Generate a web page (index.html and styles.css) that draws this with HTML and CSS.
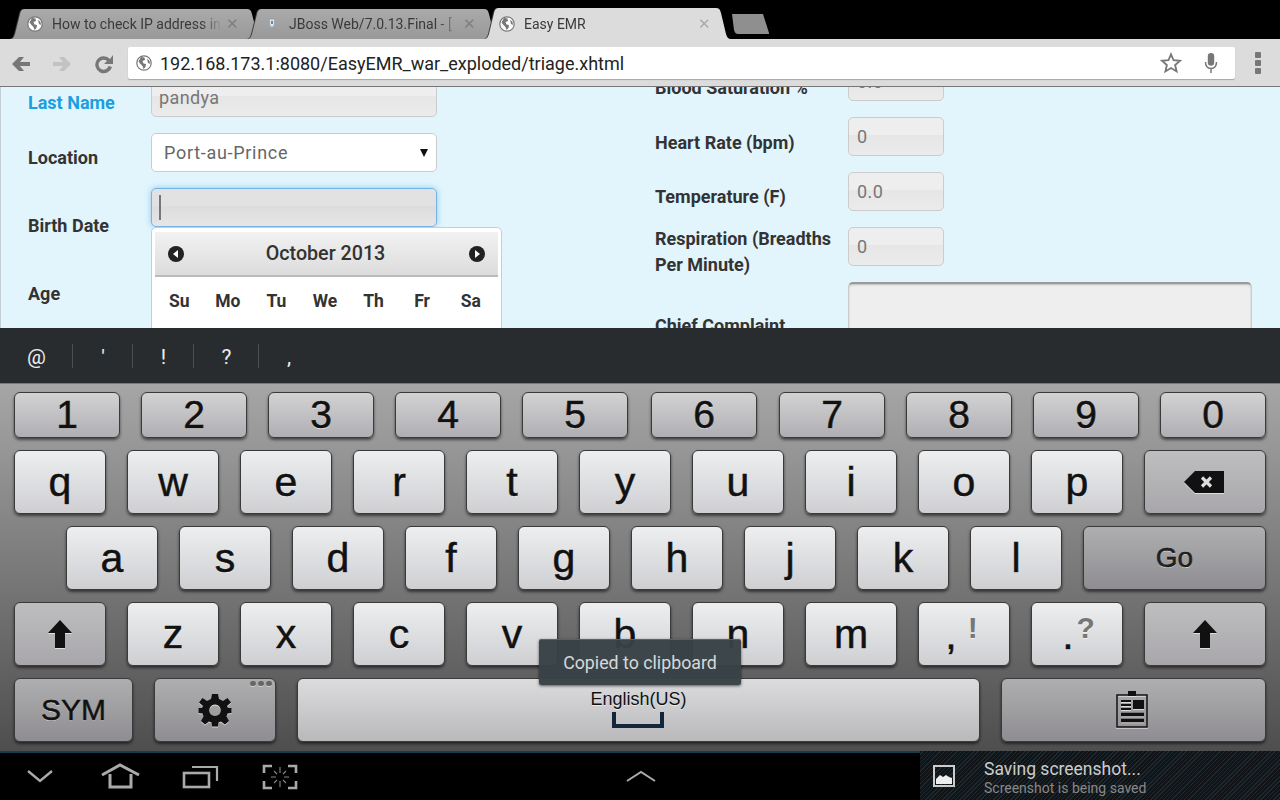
FILE: index.html
```html
<!DOCTYPE html>
<html lang="en">
  <head>
    <meta charset="UTF-8" />
    <title>Easy EMR</title>
    <link rel="stylesheet" href="styles.css">
  </head>
  <body>
    <svg class="defs" width="0" height="0">
      <symbol id="globe" viewBox="0 0 16 16">
        <circle cx="8" cy="8" r="7.2" fill="#fff" stroke="#777" stroke-width="1.2" />
        <path d="M5 2 L8.5 2.5 L9 5 L6.5 6 L7.5 8.5 L10 9 L9.5 12 L7.5 14 L6.5 11 L4 8.5 L2.5 6.5 Z" fill="#777" />
        <path d="M11 3.5 L13.5 6 L14 9 L12 8 Z" fill="#777" />
      </symbol>
      <symbol id="shift" viewBox="0 0 26 30">
        <path d="M13 1 L25 14 L18 14 L18 29 L8 29 L8 14 L1 14 Z" fill="#111" />
      </symbol>
    </svg>

    <div class="tabstrip">
      <div class="tab">
        <div class="tab-shape">
          <svg class="favicon"><use href="#globe" /></svg>
          <span class="tab-title">How to check IP address in</span>
          <span class="tab-close">&#10005;</span>
        </div>
      </div>
      <div class="tab">
        <div class="tab-shape">
          <svg class="favicon" viewBox="0 0 16 16">
            <path d="M5 3 L11 3 L10.5 9 L8 12 L5.5 9 Z" fill="#dfe6ea" stroke="#8aa0ad" />
            <rect x="7" y="5" width="2" height="3" fill="#6d8797" />
          </svg>
          <span class="tab-title">JBoss Web/7.0.13.Final - [</span>
          <span class="tab-close">&#10005;</span>
        </div>
      </div>
      <div class="tab active">
        <div class="tab-shape">
          <svg class="favicon"><use href="#globe" /></svg>
          <span class="tab-title">Easy EMR</span>
          <span class="tab-close">&#10005;</span>
        </div>
      </div>
      <div class="newtab"></div>
    </div>

    <div class="toolbar">
      <svg class="toolbtn" viewBox="0 0 24 24">
        <path d="M21 10 L11 10 L15 5 L10 5 L3 12 L10 19 L15 19 L11 14 L21 14 Z" fill="#777" />
      </svg>
      <svg class="toolbtn" viewBox="0 0 24 24">
        <path d="M3 10 L13 10 L9 5 L14 5 L21 12 L14 19 L9 19 L13 14 L3 14 Z" fill="#c2c2c2" />
      </svg>
      <svg class="toolbtn" viewBox="0 0 24 24">
        <path d="M18 7 A8.5 8.5 0 1 0 20 15 L16.4 14 A5 5 0 1 1 15 9 L12 12 L21 12 L21 3 Z" fill="#777" />
      </svg>
      <div class="omnibox">
        <svg class="omni-globe"><use href="#globe" /></svg>
        <span class="url">192.168.173.1:8080/EasyEMR_war_exploded/triage.xhtml</span>
        <svg class="omni-icon star" viewBox="0 0 24 24">
          <path d="M12 2.5 L14.8 9 L21.8 9.6 L16.5 14.2 L18.1 21.2 L12 17.5 L5.9 21.2 L7.5 14.2 L2.2 9.6 L9.2 9 Z" fill="none" stroke="#777" stroke-width="2" />
        </svg>
        <svg class="omni-icon" viewBox="0 0 24 24">
          <rect x="8.5" y="1" width="7" height="14" rx="3.5" fill="#777" />
          <path d="M6 11 C6 16 9 18 12 18 C15 18 18 16 18 11 M12 18 L12 23" fill="none" stroke="#777" stroke-width="1.6" />
        </svg>
      </div>
      <div class="menu"><i></i><i></i><i></i></div>
    </div>

    <div class="page">
      <div class="form">
        <div class="col left">
          <div class="row">
            <label class="label label-first">Last Name</label>
            <div class="input wide">pandya</div>
          </div>
          <div class="row">
            <label class="label">Location</label>
            <div class="select">Port-au-Prince<span class="arrow"></span></div>
          </div>
          <div class="row row-birth">
            <label class="label label-birth">Birth Date</label>
            <div class="input wide focused"><span class="caret"></span></div>
            <div class="datepicker">
              <div class="dp-head">
                <svg class="dp-nav" viewBox="0 0 16 16"><circle cx="8" cy="8" r="8" fill="#222" /><path d="M10 4 L10 12 L5 8 Z" fill="#fff" /></svg>
                <span class="dp-title">October 2013</span>
                <svg class="dp-nav" viewBox="0 0 16 16"><circle cx="8" cy="8" r="8" fill="#222" /><path d="M6 4 L6 12 L11 8 Z" fill="#fff" /></svg>
              </div>
              <div class="dp-days">
                <span>Su</span><span>Mo</span><span>Tu</span><span>We</span><span>Th</span><span>Fr</span><span>Sa</span>
              </div>
            </div>
          </div>
          <div class="row">
            <label class="label label-age">Age</label>
          </div>
        </div>
        <div class="col right">
          <div class="row">
            <label class="label">Blood Saturation %</label>
            <div class="input small">0.0</div>
          </div>
          <div class="row">
            <label class="label">Heart Rate (bpm)</label>
            <div class="input small">0</div>
          </div>
          <div class="row">
            <label class="label label-temp">Temperature (F)</label>
            <div class="input small">0.0</div>
          </div>
          <div class="row row-resp">
            <label class="label label-resp">Respiration (Breadths Per Minute)</label>
            <div class="input small">0</div>
          </div>
          <div class="row">
            <label class="label label-chief">Chief Complaint</label>
            <div class="textarea"></div>
          </div>
        </div>
      </div>
    </div>

    <div class="suggest">
      <span class="sug s1">@</span>
      <span class="sug s2">'</span>
      <span class="sug s3">!</span>
      <span class="sug s4">?</span>
      <span class="sug s5">,</span>
    </div>

    <div class="keyboard">
      <div class="keyrow numbers">
        <div class="key num">1</div><div class="key num">2</div><div class="key num">3</div><div class="key num">4</div><div class="key num">5</div>
        <div class="key num">6</div><div class="key num">7</div><div class="key num">8</div><div class="key num">9</div><div class="key num">0</div>
      </div>
      <div class="keyrow">
        <div class="key">q</div><div class="key">w</div><div class="key">e</div><div class="key">r</div><div class="key">t</div>
        <div class="key">y</div><div class="key">u</div><div class="key">i</div><div class="key">o</div><div class="key">p</div>
        <div class="key fn w122">
          <svg class="del" viewBox="0 0 40 22">
            <path d="M0 11 L11 0 L40 0 L40 22 L11 22 Z" fill="#111" />
            <path d="M18 6.5 L27 15.5 M27 6.5 L18 15.5" stroke="#ddd" stroke-width="3.2" />
          </svg>
        </div>
      </div>
      <div class="keyrow indent">
        <div class="key">a</div><div class="key">s</div><div class="key">d</div><div class="key">f</div><div class="key">g</div>
        <div class="key">h</div><div class="key">j</div><div class="key">k</div><div class="key">l</div>
        <div class="key dark w183 go">Go</div>
      </div>
      <div class="keyrow">
        <div class="key fn"><svg class="shift"><use href="#shift" /></svg></div>
        <div class="key">z</div><div class="key">x</div><div class="key">c</div><div class="key">v</div><div class="key">b</div>
        <div class="key">n</div><div class="key">m</div>
        <div class="key alt alt-comma">,<sup>!</sup></div>
        <div class="key alt alt-dot">.<sup>?</sup></div>
        <div class="key fn w122"><svg class="shift"><use href="#shift" /></svg></div>
      </div>
      <div class="keyrow">
        <div class="key dark w119 sym">SYM</div>
        <div class="key dark w122 gearkey">
          <span class="dots"><i></i><i></i><i></i></span>
          <svg class="gear" viewBox="0 0 34 34">
            <path d="M14 1 L20 1 L21 6 L25 8 L29.5 5 L33 9.5 L29 13 L30 15 L33.5 15 L33.5 20 L29.5 20.5 L28.5 23.5 L31 28 L27 31.5 L23 28.5 L20.5 29.5 L20 33.5 L14 33.5 L13.5 29.5 L11 28.5 L7 31.5 L3 28 L5.5 23.5 L4.5 20.5 L0.5 20 L0.5 15 L4 15 L5 13 L1 9.5 L4.5 5 L9 8 L13 6 Z M17 11.5 A5.8 5.8 0 1 0 17.01 11.5 Z" fill="#111" fill-rule="evenodd" />
          </svg>
        </div>
        <div class="key space">
          <span class="lang">English(US)</span>
          <span class="spacebar"></span>
        </div>
        <div class="key dark w265">
          <svg class="clip" viewBox="0 0 32 37">
            <path d="M1 4 L31 4 L31 36 L1 36 Z" fill="none" stroke="#111" stroke-width="1.6" />
            <rect x="12" y="0" width="8" height="5" fill="#111" />
            <rect x="17" y="9" width="11" height="9" fill="#111" />
            <path d="M5 10 L15 10 M5 14 L15 14 M5 18 L15 18" stroke="#111" stroke-width="2" />
            <path d="M5 23.5 L28 23.5 M5 29.5 L28 29.5" stroke="#111" stroke-width="3.4" />
          </svg>
        </div>
      </div>
      <div class="toast">Copied to clipboard</div>
    </div>

    <div class="navbar">
      <svg class="nav-icons" viewBox="0 0 300 46">
        <path d="M28 18 L40 28 L52 18" fill="none" stroke="#aaa" stroke-width="2.4" />
        <path d="M102 22 L120 12 L139 22 M110 21 L110 34 L131 34 L131 21" fill="none" stroke="#aaa" stroke-width="3" />
        <rect x="184" y="20" width="25" height="14" fill="none" stroke="#aaa" stroke-width="2.6" />
        <path d="M192 14 L217 14 L217 28" fill="none" stroke="#aaa" stroke-width="2.2" />
        <path d="M272 13 L264 13 L264 20 M288 13 L296 13 L296 20 M264 28 L264 35 L272 35 M296 28 L296 35 L288 35" fill="none" stroke="#aaa" stroke-width="2.6" />
        <path d="M280 14 L280 20 M280 28 L280 34 M271 24 L276 24 M284 24 L289 24 M274 18 L277 21 M286 18 L283 21 M274 30 L277 27 M286 30 L283 27" stroke="#888" stroke-width="1.1" />
      </svg>
      <svg class="nav-up" viewBox="0 0 30 12">
        <path d="M1 11 L15 2 L29 11" fill="none" stroke="#aaa" stroke-width="2" />
      </svg>
      <div class="notif">
        <svg class="notif-icon" viewBox="0 0 22 22">
          <rect x="1" y="1" width="20" height="20" fill="none" stroke="#ccc" stroke-width="2" />
          <path d="M3 19 L3 14 L7 10 L10 12 L13 10 L16 12 L19 13 L19 19 Z" fill="#eee" />
        </svg>
        <div class="notif-text">
          <div class="notif-title">Saving screenshot...</div>
          <div class="notif-sub">Screenshot is being saved</div>
        </div>
      </div>
    </div>
  </body>
</html>
```

FILE: styles.css
```css
body {
  margin: 0;
  padding: 0;
  width: 1280px;
  height: 800px;
  overflow: hidden;
  background-color: #000;
  font-family: Roboto, sans-serif;
  display: flex;
  flex-direction: column;
}
.defs {
  position: absolute;
}

/* tabs */
.tabstrip {
  height: 30px;
  padding: 9px 0 0 10px;
  display: flex;
  align-items: flex-end;
  flex: none;
}
.tab {
  width: 252px;
  height: 30px;
  margin-right: -15px;
  filter: drop-shadow(-1px 0 0 #3c3c3c);
}
.tab-shape {
  width: 252px;
  height: 30px;
  display: flex;
  align-items: center;
  padding-left: 17px;
  box-sizing: border-box;
  background: linear-gradient(#aaa, #999);
  clip-path: path("M0 30 C3 30 4 28 5 25 L10 5 C11 1 12 0 16 0 L236 0 C240 0 241 1 242 5 L247 25 C248 28 249 30 252 30 Z");
}
.tab.active {
  width: 247px;
  height: 31px;
}
.tab.active .tab-shape {
  width: 247px;
  height: 31px;
  background: #dcdcdc;
  padding-left: 15px;
  clip-path: path("M0 31 C3 31 4 29 5 26 L10 5 C11 1 12 0 16 0 L231 0 C235 0 236 1 237 5 L242 26 C243 29 244 31 247 31 Z");
}
.favicon {
  width: 16px;
  height: 16px;
  flex: none;
  margin-right: 9px;
}
.tab-title {
  width: 170px;
  flex: none;
  font-size: 14px;
  color: #3a3a3a;
  white-space: nowrap;
  overflow: hidden;
  -webkit-mask-image: linear-gradient(to right, #000 88%, transparent);
  mask-image: linear-gradient(to right, #000 88%, transparent);
}
.tab-close {
  font-size: 15px;
  font-family: "DejaVu Sans", sans-serif;
  font-weight: bold;
  color: #7e7e7e;
  margin-left: 4px;
}
.tab.active .tab-close {
  color: #aaa;
}
.newtab {
  width: 38px;
  height: 20px;
  margin: 0 0 5px 15px;
  background: #8f8f8f;
  clip-path: path("M1 0 L32 0 L38 19 L38 20 L7 20 C5 20 4 19 3 16 Z");
}

/* toolbar */
.toolbar {
  height: 47px;
  background-color: #dcdcdc;
  border-bottom: 1px solid #777;
  display: flex;
  align-items: center;
  flex: none;
}
.toolbtn {
  width: 24px;
  height: 24px;
  margin: 2px 0 0 17px;
  flex: none;
}
.toolbtn:first-child {
  margin-left: 9px;
}
.toolbtn:nth-child(3) {
  margin-left: 18px;
}
.omnibox {
  width: 1107px;
  height: 32px;
  margin: 1px 0 0 12px;
  background-color: #fff;
  border-radius: 2px;
  box-shadow: 0 1px 1px rgba(0, 0, 0, 0.25);
  display: flex;
  align-items: center;
  flex: none;
}
.omni-globe {
  width: 16px;
  height: 16px;
  margin-left: 8px;
}
.url {
  font-size: 18px;
  color: #222;
  margin-left: 8px;
  flex: 1;
  white-space: nowrap;
}
.omni-icon {
  width: 22px;
  height: 22px;
  margin-right: 13px;
}
.omni-icon.star {
  margin-right: 18px;
}
.menu {
  margin: 1px 0 0 20px;
  display: flex;
  flex-direction: column;
  gap: 2px;
}
.menu i {
  display: block;
  width: 6px;
  height: 6px;
  background-color: #777;
  border-radius: 1px;
}

/* page under the keyboard */
.page {
  height: 241px;
  flex: none;
  overflow: hidden;
  background-color: #e2f5fd;
  border-left: 1px solid #c4cfd4;
  box-sizing: border-box;
}
.form {
  margin-top: -25px;
  display: grid;
  grid-template-columns: 654px 1fr;
}
.col.left {
  padding: 16px 0 0 27px;
}
.row {
  display: flex;
  align-items: flex-start;
  margin-bottom: 16px;
  position: relative;
}
.label {
  font-size: 18px;
  font-weight: bold;
  line-height: 26px;
  color: #333;
}
.left .label {
  width: 123px;
  flex: none;
  margin-top: 12px;
}
.left .label-first {
  color: #1a9fe0;
}
.left .label-birth {
  margin-top: 25px;
}
.left .label-age {
  margin-top: 11px;
}
.row-birth {
  height: 66px;
}
.right .label {
  width: 193px;
  flex: none;
  margin-top: 13px;
}
.right .label-temp {
  margin-top: 12px;
}
.row-resp {
  height: 39px;
}
.right .label-resp {
  margin-top: -1px;
  padding-right: 10px;
  box-sizing: border-box;
}
.right .label-chief {
  margin-top: 31px;
}
.input {
  box-sizing: border-box;
  height: 39px;
  border: 1px solid #ccc;
  border-radius: 5px;
  background: linear-gradient(#eee 0, #eee 45%, #e6e6e6 46%, #ebebeb 100%);
  font-size: 18px;
  line-height: 37px;
  letter-spacing: 0.4px;
  color: #777;
  padding-left: 7px;
}
.wide {
  width: 286px;
}
.small {
  width: 96px;
  padding-left: 8px;
}
.select {
  box-sizing: border-box;
  width: 286px;
  height: 39px;
  background-color: #fff;
  border: 1px solid #ccc;
  border-radius: 5px;
  font-size: 18px;
  line-height: 37px;
  letter-spacing: 0.7px;
  color: #666;
  padding-left: 12px;
  position: relative;
}
.arrow {
  position: absolute;
  right: 8px;
  top: 15px;
  border-left: 4px solid transparent;
  border-right: 4px solid transparent;
  border-top: 8px solid #111;
}
.focused {
  border-color: #72b4e8;
  box-shadow: 0 0 6px #8cc8f0;
  background: linear-gradient(#e2e2e2 0, #e2e2e2 45%, #dcdcdc 46%, #e6e6e6 100%);
  position: relative;
}
.caret {
  position: absolute;
  left: 7px;
  top: 6px;
  width: 2px;
  height: 25px;
  background-color: #777;
}
.textarea {
  box-sizing: border-box;
  width: 404px;
  height: 120px;
  background-color: #eee;
  border: 1px solid #ccc;
  border-top: 2px solid #999;
  border-radius: 5px;
  box-shadow: inset 0 1px 2px rgba(0, 0, 0, 0.2);
}

/* calendar popup */
.datepicker {
  position: absolute;
  left: 123px;
  top: 39px;
  box-sizing: border-box;
  width: 351px;
  height: 150px;
  padding: 4px 3px 0;
  background-color: #fff;
  border: 1px solid #ccc;
  border-radius: 5px;
}
.dp-head {
  height: 45px;
  background: linear-gradient(#f2f2f2, #dcdcdc);
  border-bottom: 2px solid #bbb;
  display: flex;
  align-items: center;
  justify-content: space-between;
  padding: 0 13px;
  box-sizing: border-box;
}
.dp-nav {
  width: 16px;
  height: 16px;
}
.dp-title {
  font-size: 19.7px;
  font-weight: 500;
  color: #333;
  margin: -1px 2px 0 0;
}
.dp-days {
  width: 340px;
  display: grid;
  grid-template-columns: repeat(7, 1fr);
  text-align: center;
  font-size: 17.5px;
  font-weight: bold;
  color: #333;
  margin-top: 14px;
}

/* keyboard suggestions */
.suggest {
  height: 56px;
  flex: none;
  box-sizing: border-box;
  background-color: #282c2f;
  border-bottom: 1px solid #777;
  padding: 2px 0 0 27px;
  display: flex;
  align-items: center;
  color: #eee;
  font-size: 21px;
}
.sug {
  position: relative;
  text-align: center;
}
.sug::after {
  content: "";
  position: absolute;
  right: 0;
  top: -1px;
  width: 1px;
  height: 24px;
  background-color: #4a4f52;
}
.s1 {
  width: 46px;
  text-align: left;
}
.s2 {
  width: 60px;
}
.s3 {
  width: 61px;
}
.s4 {
  width: 65px;
}
.s5 {
  width: 60px;
}
.s5::after {
  display: none;
}

/* keyboard */
.keyboard {
  height: 368px;
  flex: none;
  box-sizing: border-box;
  padding: 8px 14px 0;
  background: linear-gradient(#a6a6a6, #4e4e4e);
  display: flex;
  flex-direction: column;
  gap: 12px;
  position: relative;
}
.keyrow {
  display: flex;
  gap: 21px;
  height: 64px;
}
.keyrow.numbers {
  height: 46px;
}
.keyrow.indent {
  padding-left: 52px;
}
.key {
  box-sizing: border-box;
  width: 92px;
  flex: none;
  border: 1px solid #3a3a3a;
  border-radius: 6px;
  background: linear-gradient(#eceef0, #cfcfd2);
  box-shadow: 0 2px 3px rgba(0, 0, 0, 0.55);
  font-family: "Liberation Sans", sans-serif;
  font-size: 41px;
  color: #111;
  -webkit-text-stroke: 0.5px #111;
  text-shadow: 0 1px 0 rgba(255, 255, 255, 0.6);
  display: flex;
  align-items: center;
  justify-content: center;
  position: relative;
}
.key svg {
  filter: drop-shadow(0 1px 0 rgba(255, 255, 255, 0.6));
}
.key.num {
  width: 106px;
  font-size: 39px;
  background: linear-gradient(#d2d2d4, #b0aeb2);
}
.key.num:nth-child(6) {
  margin-left: 2px;
}
.key.num:nth-child(7) {
  margin-left: 1px;
}
.key.fn {
  background: linear-gradient(#bebec0, #a8a6aa);
}
.key.dark {
  background: linear-gradient(#aeaeb0, #8f8d91);
}
.go {
  font-size: 28px;
  color: #222;
}
.sym {
  font-size: 30px;
  color: #111;
}
.w119 {
  width: 119px;
}
.w122 {
  width: 122px;
}
.w183 {
  width: 183px;
}
.w265 {
  width: 265px;
}
.alt {
  align-items: flex-end;
  padding-bottom: 6px;
}
.alt sup {
  font-size: 30px;
  font-weight: bold;
  color: #777;
  -webkit-text-stroke: 0;
  line-height: 1;
  margin: 0 0 16px 6px;
  vertical-align: baseline;
}
.alt-comma {
  padding-right: 5px;
}
.alt-comma sup {
  margin-left: 11px;
}
.alt-dot {
  padding-left: 3px;
}
.alt-dot sup {
  margin-left: 3px;
}
.shift {
  width: 26px;
  height: 30px;
}
.del {
  width: 40px;
  height: 22px;
  margin-right: 2px;
}
.gear {
  width: 34px;
  height: 34px;
}
.dots {
  position: absolute;
  top: 2px;
  right: 3px;
  display: flex;
  gap: 2px;
}
.dots i {
  display: block;
  width: 6px;
  height: 5px;
  border-radius: 3px;
  background-color: #666;
  box-shadow: 0 1px 0 #ccc;
}
.space {
  width: 683px;
  flex-direction: column;
  justify-content: flex-start;
  padding-top: 10px;
  background: linear-gradient(#dcdcde, #b9b8ba);
  -webkit-text-stroke: 0;
}
.lang {
  font-size: 18px;
  line-height: 21px;
}
.spacebar {
  box-sizing: border-box;
  width: 52px;
  height: 16px;
  margin: 2px 2px 0 0;
  border: 4px solid #12263c;
  border-top: none;
}
.clip {
  width: 32px;
  height: 37px;
  margin: -2px 4px 0 0;
}
.toast {
  position: absolute;
  left: 539px;
  top: 255px;
  width: 202px;
  height: 46px;
  box-sizing: border-box;
  background-color: rgba(56, 66, 70, 0.97);
  border-top: 1px solid #5a6265;
  border-radius: 2px;
  box-shadow: 0 1px 3px rgba(0, 0, 0, 0.6);
  color: #d8d8d8;
  font-size: 17.8px;
  line-height: 46px;
  text-align: center;
}

/* system bar */
.navbar {
  flex: 1;
  background-color: #000;
  border-top: 2px solid #153e4e;
  margin-top: -1px;
  display: flex;
  position: relative;
}
.nav-icons {
  width: 300px;
  height: 46px;
  margin-right: 326px;
  flex: none;
}
.nav-up {
  width: 30px;
  height: 12px;
  margin-top: 17px;
  flex: none;
}
.notif {
  margin-left: auto;
  width: 360px;
  margin-top: -2px;
  box-sizing: border-box;
  padding-left: 13px;
  display: flex;
  align-items: center;
  background: repeating-linear-gradient(135deg, #111416 0, #111416 2px, #1d292e 2px, #1d292e 3px);
}
.notif-icon {
  width: 22px;
  height: 22px;
  margin-right: 29px;
}
.notif-title {
  font-size: 17.5px;
  line-height: 22px;
  color: #ccc;
  margin-top: 2px;
}
.notif-sub {
  font-size: 14px;
  line-height: 16px;
  color: #888;
}
```
